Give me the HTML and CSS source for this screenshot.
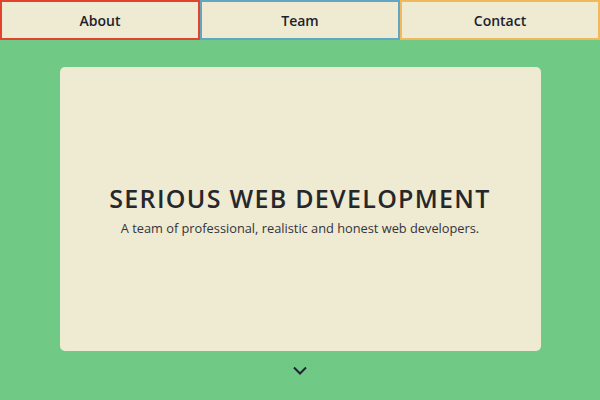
FILE: index.html
```html
<!DOCTYPE html>
<html>
<head>
<meta charset="utf-8">
<link rel="stylesheet" href="styles.css">
</head>
<body>
<nav class="nav">
  <a class="nav-btn about">About</a>
  <a class="nav-btn team">Team</a>
  <a class="nav-btn contact">Contact</a>
</nav>
<main class="main">
  <section class="card">
    <h1 class="title">SERIOUS WEB DEVELOPMENT</h1>
    <p class="subtitle">A team of professional, realistic and honest web developers.</p>
  </section>
  <div class="chevron">
    <svg width="14" height="9" viewBox="0 0 14 9"><path d="M1 1.5 L7 7.5 L13 1.5" fill="none" stroke="#1d2433" stroke-width="2"/></svg>
  </div>
</main>
</body>
</html>
```
FILE: styles.css
```css
html, body {
  margin: 0;
  padding: 0;
  background: #70c985;
  width: 600px;
  height: 400px;
  overflow: hidden;
}
.nav {
  display: flex;
}
.nav-btn {
  box-sizing: border-box;
  width: 200px;
  height: 40px;
  background: #efead2;
  border: 2px solid;
  display: flex;
  align-items: center;
  justify-content: center;
  font-family: "Open Sans", sans-serif;
  font-weight: 600;
  font-size: 14px;
  color: #1b1f2e;
}
.about { border-color: #e2432f; }
.team { border-color: #63a6c4; }
.contact { border-color: #f1b95b; }
.main {
  display: flex;
  flex-direction: column;
  align-items: center;
  padding-top: 27px;
}
.card {
  box-sizing: border-box;
  width: 481px;
  height: 284px;
  background: #efead2;
  border-radius: 5px;
  display: flex;
  flex-direction: column;
  align-items: center;
  justify-content: center;
}
.title {
  margin: 0;
  font-family: "Open Sans", sans-serif;
  font-weight: 600;
  font-size: 25px;
  letter-spacing: 1.3px;
  color: #26272b;
}
.subtitle {
  margin: 4px 0 0;
  font-family: "Open Sans", sans-serif;
  font-size: 12.8px;
  color: #33343a;
}
.chevron {
  margin-top: 15px;
  height: 9px;
  display: flex;
}
```
